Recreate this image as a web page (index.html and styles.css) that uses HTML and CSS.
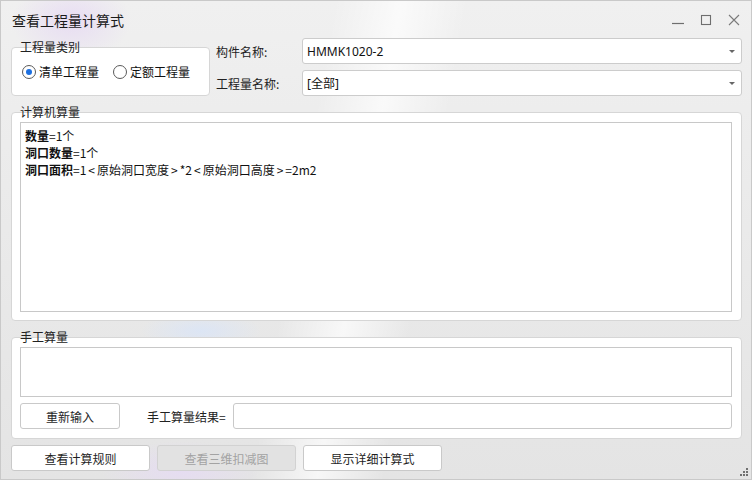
FILE: index.html
```html
<!DOCTYPE html>
<html lang="zh">
<head>
<meta charset="utf-8">
<title>查看工程量计算式</title>
<link rel="stylesheet" href="styles.css">
</head>
<body>
<div class="window">
  <div class="titlebar">
    <div class="title">查看工程量计算式</div>
    <div class="controls">
      <svg class="ctl" width="14" height="14" viewBox="0 0 14 14"><path d="M1 10.5H13" stroke="#6e6e6e" stroke-width="1.2" fill="none"/></svg>
      <svg class="ctl" width="14" height="14" viewBox="0 0 14 14"><rect x="2.5" y="2.5" width="9" height="9" stroke="#6e6e6e" stroke-width="1.1" fill="none"/></svg>
      <svg class="ctl" width="14" height="14" viewBox="0 0 14 14"><path d="M2 2L12 12M12 2L2 12" stroke="#7a7a7a" stroke-width="1.1" fill="none"/></svg>
    </div>
  </div>

  <div class="content">
    <div class="top-row">
      <div class="group type-group">
        <div class="group-label">工程量类别</div>
        <div class="radios">
          <label class="radio"><span class="circle checked"></span>清单工程量</label>
          <label class="radio"><span class="circle"></span>定额工程量</label>
        </div>
      </div>
      <div class="fields">
        <div class="field">
          <span class="field-label">构件名称:</span>
          <div class="combo"><span>HMMK1020-2</span><span class="arrow"></span></div>
        </div>
        <div class="field">
          <span class="field-label">工程量名称:</span>
          <div class="combo"><span>[全部]</span><span class="arrow"></span></div>
        </div>
      </div>
    </div>

    <div class="group calc-group">
      <div class="group-label">计算机算量</div>
      <div class="textarea calc-text">
        <div class="line"><b>数量</b>=1个</div>
        <div class="line"><b>洞口数量</b>=1个</div>
        <div class="line"><b>洞口面积</b>=1<span class="op">&lt;</span>原始洞口宽度<span class="op">&gt;</span>*2<span class="op">&lt;</span>原始洞口高度<span class="op">&gt;</span>=2m2</div>
      </div>
    </div>

    <div class="group manual-group">
      <div class="group-label">手工算量</div>
      <div class="textarea manual-text"></div>
      <div class="manual-row">
        <button class="btn reinput">重新输入</button>
        <span class="result-label">手工算量结果=</span>
        <div class="input"></div>
      </div>
    </div>

    <div class="bottom-row">
      <button class="btn wide">查看计算规则</button>
      <button class="btn wide disabled">查看三维扣减图</button>
      <button class="btn wide">显示详细计算式</button>
    </div>
  </div>

  <svg class="grip" width="10" height="10" viewBox="0 0 10 10">
    <rect x="7" y="1" width="2" height="2" fill="#707070"/>
    <rect x="4" y="4" width="2" height="2" fill="#707070"/>
    <rect x="7" y="4" width="2" height="2" fill="#707070"/>
    <rect x="1" y="7" width="2" height="2" fill="#707070"/>
    <rect x="4" y="7" width="2" height="2" fill="#707070"/>
    <rect x="7" y="7" width="2" height="2" fill="#707070"/>
  </svg>
</div>
</body>
</html>
```
FILE: styles.css
```css
* { box-sizing: border-box; }
html, body { margin: 0; padding: 0; }
body {
  width: 752px;
  height: 480px;
  font-family: "Noto Sans CJK SC", "Noto Sans", sans-serif;
  font-size: 12px;
  color: #1f1f1f;
  overflow: hidden;
}
.window {
  position: relative;
  width: 752px;
  height: 480px;
  border: 1px solid #c9c9c9;
  background:
    radial-gradient(ellipse 60px 40px at 70px 20px, rgba(225, 205, 245, 0.55), rgba(225, 205, 245, 0) 100%),
    radial-gradient(ellipse 80px 30px at 180px 470px, rgba(230, 215, 250, 0.6), rgba(230, 215, 250, 0) 100%),
    radial-gradient(ellipse 60px 20px at 200px 330px, rgba(215, 228, 250, 0.7), rgba(215, 228, 250, 0) 100%),
    linear-gradient(100deg, rgba(255,255,255,0) 40%, rgba(255,255,255,0.7) 48%, rgba(255,255,255,0) 56%),
    linear-gradient(180deg, #f0f0f0 0%, #ececec 30%, #e4e4e4 100%);
  display: flex;
  flex-direction: column;
}
.titlebar {
  height: 37px;
  display: flex;
  align-items: center;
  justify-content: space-between;
  padding: 0 10px 0 11px;
}
.title {
  font-size: 14px;
  color: #1a1a1a;
  line-height: 20px;
}
.controls {
  display: flex;
  gap: 14px;
}
.ctl { display: block; }
.content {
  padding: 0 9px 0 10px;
  display: flex;
  flex-direction: column;
}
.top-row {
  display: flex;
  height: 58px;
}
.group {
  position: relative;
  background: #fff;
  border: 1px solid #d6d6d6;
  border-radius: 4px;
}
.group-label {
  position: absolute;
  left: 8px;
  top: -9px;
  line-height: 16px;
  color: #222;
  white-space: nowrap;
}
.type-group {
  width: 199px;
  height: 49px;
  margin-top: 9px;
}
.radios {
  display: flex;
  padding: 16px 0 0 10px;
  gap: 14px;
}
.radio {
  display: flex;
  align-items: center;
  line-height: 16px;
  color: #111;
}
.circle {
  width: 14px;
  height: 14px;
  border: 1px solid #5a5a5a;
  border-radius: 50%;
  margin-right: 3px;
  position: relative;
  background: #fff;
}
.circle.checked::after {
  content: "";
  position: absolute;
  left: 3px;
  top: 3px;
  width: 6px;
  height: 6px;
  border-radius: 50%;
  background: #1c6fe0;
}
.fields {
  flex: 1;
  display: flex;
  flex-direction: column;
  gap: 6px;
  padding-left: 6px;
}
.field {
  display: flex;
  align-items: center;
  height: 26px;
}
.field-label {
  width: 86px;
  color: #222;
}
.combo {
  flex: 1;
  height: 26px;
  background: #fff;
  border: 1px solid #cccccc;
  border-radius: 3px;
  display: flex;
  align-items: center;
  justify-content: space-between;
  padding: 0 6px 0 4px;
  color: #111;
  font-family: "Noto Sans", "Noto Sans CJK SC", sans-serif;
}
.arrow {
  width: 0;
  height: 0;
  border-left: 3px solid transparent;
  border-right: 3px solid transparent;
  border-top: 3px solid #666;
}
.calc-group {
  margin-top: 16px;
  height: 209px;
  padding: 9px 9px 8px 8px;
}
.textarea {
  background: #fff;
  border: 1px solid #c8c8c8;
}
.calc-text {
  height: 190px;
  padding: 4px 0 0 4px;
}
.line {
  line-height: 17px;
  white-space: nowrap;
  color: #111;
}
.line b { font-weight: bold; }
.op { margin: 0 2px; }
.manual-group {
  margin-top: 16px;
  height: 102px;
  padding: 9px 9px 0 8px;
}
.manual-text {
  height: 50px;
}
.manual-row {
  display: flex;
  align-items: center;
  margin-top: 6px;
  height: 26px;
}
.btn {
  font-family: "Noto Sans CJK SC", "Noto Sans", sans-serif;
  font-size: 12px;
  color: #1f1f1f;
  background: #fff;
  border: 1px solid #c9c9c9;
  border-radius: 3px;
  height: 26px;
  padding: 0;
  margin: 0;
}
.reinput { width: 100px; }
.result-label {
  margin-left: 27px;
  width: 86px;
  color: #222;
}
.input {
  flex: 1;
  height: 26px;
  background: #fff;
  border: 1px solid #c9c9c9;
  border-radius: 3px;
}
.bottom-row {
  display: flex;
  gap: 7px;
  margin-top: 6px;
}
.wide { width: 139px; }
.btn.disabled {
  background: #e2e2e2;
  border-color: #d2d2d2;
  color: #a3a3a3;
}
.grip {
  position: absolute;
  right: 2px;
  bottom: 2px;
}
```
